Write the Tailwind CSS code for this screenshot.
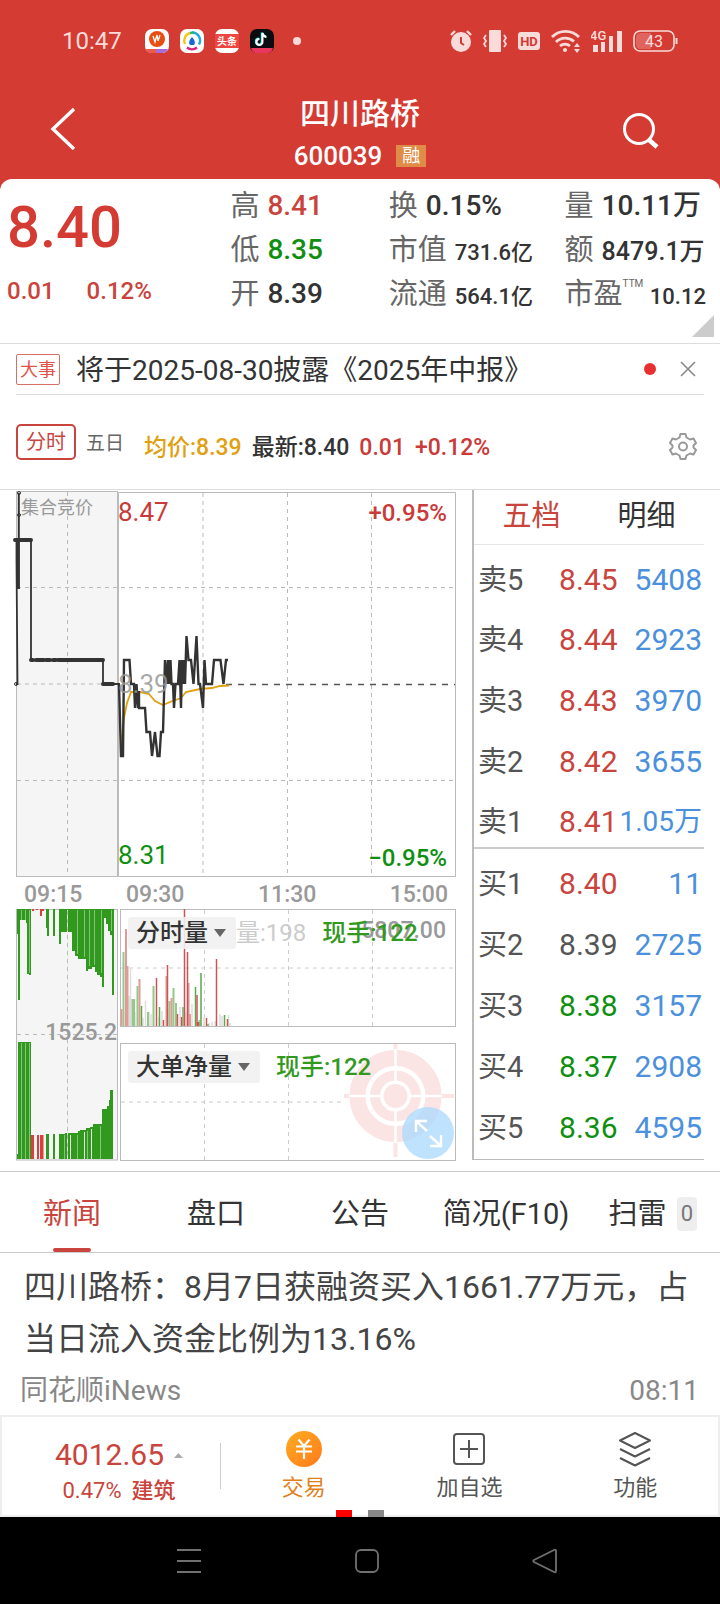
<!DOCTYPE html>
<html lang="zh-CN">
<head>
<meta charset="utf-8">
<meta name="viewport" content="width=device-width, initial-scale=1">
<title>四川路桥 600039</title>
<script src="https://cdn.jsdelivr.net/npm/@tailwindcss/browser@4"></script>
</head>
<body class="bg-black font-[Roboto,'Noto_Sans_CJK_SC',sans-serif] text-[#333]">
<div class="flex min-h-screen w-full flex-col bg-white">

  <div class="bg-[#d43b33]">
    <!-- status bar -->
    <div class="flex h-[82px] items-center justify-between pl-[62px] pr-[42px] text-[#f9dcda]">
      <div class="flex items-center gap-[11px]">
        <span class="mr-3 text-[24px] leading-6">10:47</span>
        <svg class="size-6" viewBox="0 0 24 24"><rect width="24" height="24" rx="7" fill="#fff"/><circle cx="12" cy="10" r="8" fill="#e84e10"/><path d="M8 7l2 6 2-7 1 6 2-6" stroke="#fff" fill="none" stroke-width="1.3"/><path d="M1 20h22q-2 4-6 4H7q-4 0-6-4z" fill="#a66bd8"/><path d="M1 20h10v4H7q-4 0-6-4z" fill="#ee5a4a"/></svg>
        <svg class="size-6" viewBox="0 0 24 24"><rect width="24" height="24" rx="7" fill="#fff"/><g fill="none" stroke-width="2.4"><path d="M5 15a8 8 0 0 1 5-11" stroke="#f6c51c"/><path d="M12 3.500a8 8 0 0 1 7 12" stroke="#22a6e8"/><path d="M10 4a8 8 0 0 1 4 0" stroke="#2bb673"/><path d="M7 18.500a8 8 0 0 0 10 0" stroke="#d6247c"/></g><path d="M12 8q3 3 3 6l-1 2h-4l-1-2q0-3 3-6z" fill="#1668d8"/></svg>
        <svg class="size-6" viewBox="0 0 24 24"><rect width="24" height="24" rx="7" fill="#fff"/><path d="M0 5h24v14H0z" fill="#ef4540"/><text x="12" y="16" font-size="10" font-weight="700" fill="#fff" text-anchor="middle">头条</text></svg>
        <svg class="size-6" viewBox="0 0 24 24"><rect width="24" height="24" rx="7" fill="#0b0b12"/><path d="M12.500 4v9a3 3 0 1 1-3-3M12.500 4q.5 3.500 4 4" fill="none" stroke="#25f4ee" stroke-width="2" transform="translate(-.7 -.5)"/><path d="M12.500 4v9a3 3 0 1 1-3-3M12.500 4q.5 3.500 4 4" fill="none" stroke="#fff" stroke-width="2"/><path d="M1 19h22q-1 5-6 5H7q-5 0-6-5z" fill="#e8365f"/></svg>
        <span class="ml-2 size-2 rounded-full bg-[#f9dcda]"></span>
      </div>
      <div class="flex items-center gap-[10px]">
        <svg class="size-6" viewBox="0 0 24 24" fill="#f9dcda"><circle cx="12" cy="13" r="10"/><path d="M2 6l4-4M22 6l-4-4" stroke="#f9dcda" stroke-width="2.400"/><path d="M12 8v6l3 2" stroke="#d43b33" stroke-width="2" fill="none"/></svg>
        <svg class="size-6" viewBox="0 0 24 24"><rect x="6" y="1" width="12" height="22" rx="1" fill="#f9dcda"/><path d="M3 6l-2 3 2 3-2 3 2 3M21 6l2 3-2 3 2 3-2 3" fill="none" stroke="#f9dcda" stroke-width="1.800"/></svg>
        <svg class="h-5 w-6" viewBox="0 0 24 20"><rect x="1" y="1" width="22" height="18" rx="3" fill="#f9dcda"/><text x="12" y="15" font-size="13" font-weight="700" fill="#d43b33" text-anchor="middle">HD</text></svg>
        <svg class="h-6 w-[30px]" viewBox="0 0 30 24" fill="none" stroke="#f9dcda" stroke-width="2.800"><path d="M1 8a19 19 0 0 1 27 0M5 13a13 13 0 0 1 18-.5M9 17a8 8 0 0 1 10 0"/><circle cx="14" cy="21" r="2" fill="#f9dcda" stroke="none"/><path d="M23 18l3-4 3 4zM23 20l3 4 3-4z" fill="#f9dcda" stroke="none"/></svg>
        <svg class="h-6 w-8" viewBox="0 0 32 24" fill="#f9dcda"><path d="M2 16h5v7H2zM10 13h4v10h-4zM18 7h4v16h-4zM26 2h5v21h-5z"/><text x="-1" y="11" font-size="13" font-weight="500">4G</text></svg>
        <svg class="h-[22px] w-[45px]" viewBox="0 0 45 22"><rect x="1" y="1" width="40" height="20" rx="6" fill="none" stroke="#f9dcda" stroke-width="1.600"/><path d="M3 8q0-5 5-5h10v16H8q-5 0-5-5z" fill="#e0655f"/><path d="M43.500 8v6" stroke="#f9dcda" stroke-width="2"/><text x="21" y="17" font-size="16" fill="#f9dcda" text-anchor="middle">43</text></svg>
      </div>
    </div>
    <!-- title bar -->
    <header class="grid h-[97px] grid-cols-[1fr_auto_1fr] items-start px-[46px] text-white">
      <button type="button" aria-label="返回" class="justify-self-start pt-[26px]"><svg class="h-[42px] w-[34px]" viewBox="0 0 34 42"><path d="M28 1L7 21l21 20" fill="none" stroke="#fff" stroke-width="3.400"/></svg></button>
      <div class="flex flex-col items-center pt-3">
        <h1 class="text-[30px] font-medium leading-10">四川路桥</h1>
        <div class="flex items-center gap-3.5 pt-1"><span class="text-[26px] font-medium leading-9">600039</span><span class="bg-[#e08c48] px-1.5 text-[18px] leading-[22px]">融</span></div>
      </div>
      <button type="button" aria-label="搜索" class="mr-3 justify-self-end pt-[28px]"><svg class="size-[42px]" viewBox="0 0 42 42"><circle cx="19" cy="19" r="14.500" fill="none" stroke="#fff" stroke-width="3"/><path d="M28 29l9 8" stroke="#fff" stroke-width="4.500"/></svg></button>
    </header>
    <!-- quote summary -->
    <section class="relative flex h-[165px] rounded-t-[12px] border-b border-[#ddd] bg-white">
      <div class="w-[32%] pl-[7px] font-medium text-[#d43b33]">
        <div class="pt-[18px] text-[58px] leading-[60px]">8.40</div>
        <div class="flex gap-8 pt-[18px] text-[24px] leading-8 text-[#c9443c]"><span>0.01</span><span>0.12%</span></div>
      </div>
      <dl class="grid w-[22%] auto-rows-[44px] content-start pt-[5px] text-[28px] leading-[44px] [&_dt]:text-[29px]">
        <div class="flex gap-2"><dt class="text-[#666]">高</dt><dd class="font-medium text-[#c9443c]">8.41</dd></div>
        <div class="flex gap-2"><dt class="text-[#666]">低</dt><dd class="font-medium text-[#0f8f0f]">8.35</dd></div>
        <div class="flex gap-2"><dt class="text-[#666]">开</dt><dd class="font-medium">8.39</dd></div>
      </dl>
      <dl class="grid w-[24%] auto-rows-[44px] content-start pt-[5px] text-[28px] leading-[44px] [&_dt]:text-[29px]">
        <div class="flex gap-2"><dt class="text-[#666]">换</dt><dd class="font-medium">0.15%</dd></div>
        <div class="flex items-baseline gap-2"><dt class="text-[#666]">市值</dt><dd class="text-[22px] font-medium">731.6亿</dd></div>
        <div class="flex items-baseline gap-2"><dt class="text-[#666]">流通</dt><dd class="text-[22px] font-medium">564.1亿</dd></div>
      </dl>
      <dl class="grid flex-1 auto-rows-[44px] content-start pl-[3px] pr-3.5 pt-[5px] text-[28px] leading-[44px] [&_dt]:text-[29px]">
        <div class="flex gap-2"><dt class="text-[#666]">量</dt><dd class="font-medium">10.11万</dd></div>
        <div class="flex items-baseline gap-2"><dt class="text-[#666]">额</dt><dd class="whitespace-nowrap text-[25px] font-medium">8479.1万</dd></div>
        <div class="flex items-baseline justify-between"><dt class="flex text-[#666]">市盈<span class="pt-1.5 text-[10px] leading-3">TTM</span></dt><dd class="text-[22px] font-medium">10.12</dd></div>
      </dl>
      <svg class="absolute bottom-1.5 right-1.5 size-[22px]" viewBox="0 0 22 22"><path d="M22 0v22H0z" fill="#ccc"/></svg>
    </section>
  </div>

  <!-- announcement -->
  <section class="mx-4 flex h-[51px] items-center border-b border-[#ddd]">
    <span class="rounded-xs border border-[#d97068] px-[3px] text-[18px] leading-[29px] text-[#e0524a]">大事</span>
    <a href="#notice" class="ml-4 flex-1 truncate pt-[3px] text-[28px] leading-10">将于2025-08-30披露《2025年中报》</a>
    <span class="size-3 rounded-full bg-[#e83030]"></span>
    <button type="button" aria-label="关闭" class="ml-6 mr-2"><svg class="size-4" viewBox="0 0 16 16"><path d="M1 1l14 14M15 1L1 15" stroke="#888" stroke-width="1.600"/></svg></button>
  </section>

  <!-- period switch -->
  <section class="flex h-[95px] items-center border-b border-[#ddd] px-4">
    <button type="button" class="rounded-[5px] border-2 border-[#c9443c] px-2 text-[20px] leading-8 text-[#c9443c]">分时</button>
    <button type="button" class="ml-2.5 pt-1 text-[19px] leading-8 text-[#666]">五日</button>
    <div class="ml-5 flex flex-1 gap-2.5 whitespace-nowrap pt-3 text-[23px] font-medium leading-8"><span class="text-[#e0a010]">均价:8.39</span><span>最新:8.40</span><span class="text-[#c93a38]">0.01</span><span class="text-[#c93a38]">+0.12%</span></div>
    <button type="button" aria-label="设置" class="mr-[7px] pt-2"><svg class="size-[28px]" viewBox="0 0 28 28" fill="none" stroke="#999" stroke-width="2" stroke-linejoin="round"><path d="M11.500 2h5l1 3.500 3.500 2 3.500-1 2.500 4.500-2.500 2.500v2l2.500 2.500-2.500 4.500-3.500-1-3.500 2-1 3.500h-5l-1-3.500-3.500-2-3.500 1L1 18l2.500-2.500v-2L1 11l2.500-4.500 3.500 1 3.500-2z"/><circle cx="14" cy="14.500" r="4"/></svg></button>
  </section>

  <!-- chart and order book -->
  <main class="flex items-start">
    <div class="min-w-0 flex-[59]">
      <svg class="block w-full" viewBox="0 489 472 419" role="img" aria-label="分时走势">
        <rect x="16.500" y="490.500" width="101" height="385" fill="#f5f5f5" stroke="#bbb"/>
        <path d="M118.500 491.500H455.500V875.500H118.500z" fill="none" stroke="#bbb"/>
        <g stroke="#bbb" stroke-dasharray="4 4"><path d="M67.500 491V875M203 492V875M287.500 492V875M371.500 492V875M17 586.500H455M17 779.500H455M17 683H118" fill="none"/></g>
        <path d="M226 683.500H455" stroke="#555" stroke-width="1.600" stroke-dasharray="6 6"/>
        <text x="21" y="513" font-size="18" fill="#999">集合竞价</text>
        <text x="118" y="520" font-size="26" fill="#c93a38">8.47</text>
        <text x="118" y="863" font-size="26" fill="#0f8f0f">8.31</text>
        <text x="447" y="520" font-size="24" font-weight="500" fill="#c93a38" text-anchor="end">+0.95%</text>
        <text x="447" y="865" font-size="24" font-weight="500" fill="#0f8f0f" text-anchor="end">−0.95%</text>
        <g fill="none" stroke="#333">
          <path d="M16 683h1.500L16.500 560V539M31 539V659M103 659V683H120" stroke-width="1.800"/>
          <path d="M18.800 588V492" stroke-width="2"/><path d="M17.800 588V539" stroke-width="3.600"/>
          <path d="M15 539H31M31 659h2M36 659h8M46 659h4M53 659h3M58 659H103M103 683h10" stroke-width="4" stroke-linecap="round"/>
          <circle cx="16" cy="683" r="1.500"/><circle cx="19" cy="492" r="1.500"/><circle cx="19" cy="514" r="1.500"/>
        </g>
        <path d="M121 745L124 717 127 702 131 691 140 691 149 693 155 700 163 704 170 701 181 697 186 691 200 688 212 687 220 685 229 684.500" fill="none" stroke="#e0a010" stroke-width="1.800"/>
        <path d="M119 683L121 755H123L124 659H129.500L131 683H134L135 707 136.500 683 138 707 139 690V707H145L146.500 731H150L152 755 155 731 157.500 755H159.500L161 731H163L165 659 167 683 168 659 169 683 170.500 659 171.500 683H173L174 707 175.500 683H178L179.500 659 181 707 182 659 183 683 184 659 185 683 186.500 635 188.500 659H191L193.500 683 196.500 635 198.500 683H200L203 707 204.500 659 206 683H212L214 659H220.500L223.500 683 226 659H228" fill="none" stroke="#333" stroke-width="2.400"/>
        <text x="118" y="692" font-size="26" fill="#999" fill-opacity=".85">8.39</text>
        <g font-size="23" font-weight="500" fill="#999"><text x="24" y="901">09:15</text><text x="126" y="901">09:30</text><text x="258" y="901">11:30</text><text x="448" y="901" text-anchor="end">15:00</text></g>
      </svg>
      <div class="flex items-start">
        <svg class="block w-1/4" viewBox="0 908 118 252" role="img" aria-label="竞价量">
          <rect x="16.500" y="908.500" width="101" height="250.500" fill="#f5f5f5" stroke="#bbb"/>
          <g fill="#32991f">
            <path d="M17 908H31v66h-2v-1h-2v-51h-1v-3h-6v80h-2v-66h-1zM46 908h3v27h-2v-8h-1zM53 908h2v27h-2zM59 908h55v86h-2v-60h-2v-4h-2v-7h-2v-6h-2v69h-2v-10h-2v-2h-3v-3h-2v-5h-3v2h-4v2h-2v-12h-8v-3h-3v-5h-3v-19h-11v12h-2z"/>
            <path d="M17 1158v-5h1v-112h13v117zM46 1133h3v25h-3zM53 1133h2v25h-2zM59 1158v-25h6v-1h13v-2h2v-1h6v-2h4v-1h3v-3h9v-15h5v-3h2v-6h1v-10h3v69z"/>
          </g>
          <path d="M32 908h2v2h-2zM36 908h2v1h-2zM40 908h2v7h-2zM42 908h2v2h-2z" fill="#d9403a"/>
          <path d="M31 1134h3v24h-3zM37 1134h2v24h-2zM40 1134h3.500v24h-3.500z" fill="#d9403a"/>
          <path d="M21.500 909V919M25.500 909V919M29.500 909V972M77.500 909V953M84.500 909V956M89.500 909V965M94.500 909V964M101.500 909V972M111.500 909V930M21.500 1042V1158M25.500 1042V1158M29.500 1042V1158M64.500 1134V1158M77.500 1134V1158M87.500 1130V1158M100.500 1125V1158" stroke="#86c37b"/>
          <path d="M67.500 909V1158M70.500 1134V1158M84.500 1131V1158M91.500 1128V1158" stroke="#e6efe3"/>
          <path d="M17 1033.500H117M67.500 910V1158" stroke="#bbb" stroke-dasharray="4 4"/>
          <text x="117" y="1039" font-size="23" font-weight="500" fill="#999" text-anchor="end">1525.2</text>
        </svg>
        <div class="flex w-3/4 flex-col gap-4">
          <div class="relative">
            <svg class="block w-full" viewBox="118 908 354 118" role="img" aria-label="分时量">
              <rect x="120.500" y="908.500" width="335" height="117" fill="none" stroke="#bbb"/>
              <path d="M121 967H455M204.500 909V1025M288.500 909V1025M372.500 909V1025" stroke="#ccc" stroke-dasharray="4 4"/>
              <g stroke-width="1.500" fill="none">
                <path d="M129 1025V995M130.500 1025V968M135 1025V1011M143 1025V1017M145.500 1025V1000M151 1025V1013M162 1025V1010M180 1025V1006M186 1025V1011M192 1025V1003M209 1025V1022M212 1025V1021M215 1025V1020M220 1025V1013M222 1025V1015M230 1025V1022M149 1025V1011M159 1025V1016M204 1025V1016M228.500 1025V1014" stroke="#ddd"/>
                <path d="M123.500 1025V951M132.500 1025V998M134 1025V998M137.500 1025V985M148 1025V1011M153.500 1025V985M169.500 1025V1000M173.500 1025V987M176 1025V1002M183 1025V1006M199.500 1025V1019M208 1025V1023" stroke="#94c98b" stroke-width="2"/>
                <path d="M121.500 1025V1008M126 1025V928M127.500 1025V965M139.500 1025V978M171.500 1025V997M188.500 1025V982M190 1025V1013M166.500 1025V975" stroke="#e29a98" stroke-width="2"/>
                <path d="M141.500 1025V1005M159.500 1025V1006M195.500 1025V986M201 1025V972M224.500 1025V1014" stroke="#58aa4c"/>
                <path d="M156.500 1025V977M163.500 1025V1019M167.500 1025V964M177.500 1025V1013M181.500 1025V1016M184.500 1025V908M187.500 1025V951M197 1025V994M198.500 1025V1021M206.500 1025V1017M216.500 1025V958M227.500 1025V1018" stroke="#cc5553"/>
              </g>
              <text x="446" y="937" font-size="23" font-weight="500" fill="#999" text-anchor="end">5807.00</text>
            </svg>
            <div class="absolute left-2.5 top-2 flex items-center whitespace-nowrap text-[24px] font-medium leading-8">
              <button type="button" class="flex items-center gap-1.5 rounded-[3px] bg-[#f1f1f1]/90 pl-2 pr-2.5">分时量<svg class="h-2 w-3" viewBox="0 0 12 8"><path d="M0 0h12L6 8z" fill="#666"/></svg></button>
              <span class="font-normal text-[#ccc]">量:198</span>
              <span class="ml-4 text-[#32991f]">现手:122</span>
            </div>
          </div>
          <div class="relative">
            <svg class="block w-full" viewBox="118 1042 354 118" role="img" aria-label="大单净量">
              <path d="M121 1101H341M204.500 1043V1159M288.500 1043V1159" stroke="#ccc" stroke-dasharray="4 4"/>
              <g fill="none" stroke="#fbe5e4">
                <circle cx="395.500" cy="1095" r="38" stroke-width="16"/><circle cx="395.500" cy="1095" r="20.500" stroke-width="10"/><circle cx="395.500" cy="1095" r="12" fill="#fbe5e4" stroke="none"/>
                <path d="M344 1095h8M439 1095h15M395.500 1043v8M395.500 1140v16" stroke-width="4"/>
              </g>
              <path d="M349 1095h34M408 1095h34M395.500 1048v34M395.500 1108v34" stroke="#fff" stroke-width="2.500"/>
              <rect x="120.500" y="1042.500" width="335" height="117" fill="none" stroke="#bbb"/>
            </svg>
            <div class="absolute left-2.5 top-2 flex items-center gap-4 whitespace-nowrap text-[24px] font-medium leading-8">
              <button type="button" class="flex items-center gap-1.5 rounded-[3px] bg-[#f1f1f1]/90 pl-2 pr-2.5">大单净量<svg class="h-2 w-3" viewBox="0 0 12 8"><path d="M0 0h12L6 8z" fill="#666"/></svg></button>
              <span class="text-[#32991f]">现手:122</span>
            </div>
            <button type="button" aria-label="全屏" class="absolute bottom-0.5 right-[18px] size-[52px] rounded-full bg-[#a9d9ff]/75"><svg class="size-full" viewBox="0 0 52 52" fill="none" stroke="#fff" stroke-width="2.400"><path d="M14 25V14h11M14.500 14.500L25 24M39 28v11H28M38.500 38.500L28 29"/></svg></button>
          </div>
        </div>
      </div>
    </div>

    <aside class="min-w-0 flex-[31]">
      <div class="mr-4 border-b border-l-2 border-[#bbb] pb-1.5">
        <div class="grid h-[55px] grid-cols-2 border-b border-[#e5e5e5] text-[29px]"><button type="button" class="text-[#c9443c]">五档</button><button type="button">明细</button></div>
        <table class="w-full table-fixed border-collapse text-[30px] leading-9 text-[#555] [&_td]:whitespace-nowrap [&_td]:pt-2.5 [&_th]:pl-1 [&_th]:pt-2.5 [&_th]:text-left [&_th]:text-[29px] [&_th]:font-normal">
          <colgroup><col class="w-[37%]"><col class="w-[26%]"><col class="w-[37%]"></colgroup>
          <tbody class="border-b-2 border-[#ccc]">
            <tr class="h-[59px]"><th scope="row">卖5</th><td class="text-[#c9443c]">8.45</td><td class="pr-0.5 text-right text-[#4a90dc]">5408</td></tr>
            <tr class="h-[61px]"><th scope="row">卖4</th><td class="text-[#c9443c]">8.44</td><td class="pr-0.5 text-right text-[#4a90dc]">2923</td></tr>
            <tr class="h-[61px]"><th scope="row">卖3</th><td class="text-[#c9443c]">8.43</td><td class="pr-0.5 text-right text-[#4a90dc]">3970</td></tr>
            <tr class="h-[61px]"><th scope="row">卖2</th><td class="text-[#c9443c]">8.42</td><td class="pr-0.5 text-right text-[#4a90dc]">3655</td></tr>
            <tr class="h-[61px]"><th scope="row">卖1</th><td class="text-[#c9443c]">8.41</td><td class="pr-0.5 text-right text-[28px] text-[#4a90dc]">1.05万</td></tr>
          </tbody>
          <tbody>
            <tr class="h-[61px]"><th scope="row">买1</th><td class="text-[#c9443c]">8.40</td><td class="pr-0.5 text-right text-[#4a90dc]">11</td></tr>
            <tr class="h-[61px]"><th scope="row">买2</th><td>8.39</td><td class="pr-0.5 text-right text-[#4a90dc]">2725</td></tr>
            <tr class="h-[61px]"><th scope="row">买3</th><td class="text-[#0f8f0f]">8.38</td><td class="pr-0.5 text-right text-[#4a90dc]">3157</td></tr>
            <tr class="h-[61px]"><th scope="row">买4</th><td class="text-[#0f8f0f]">8.37</td><td class="pr-0.5 text-right text-[#4a90dc]">2908</td></tr>
            <tr class="h-[61px]"><th scope="row">买5</th><td class="text-[#0f8f0f]">8.36</td><td class="pr-0.5 text-right text-[#4a90dc]">4595</td></tr>
          </tbody>
        </table>
      </div>
    </aside>
  </main>

  <!-- news tabs -->
  <nav class="mt-2.5 grid h-[82px] grid-cols-5 border-y border-[#ccc] text-[29px] leading-10 [&>a]:pt-[3px]">
    <a href="#news" class="relative flex items-center justify-center text-[#c9443c]">新闻<span class="absolute bottom-0 h-1 w-[38px] rounded-full bg-[#c9443c]"></span></a>
    <a href="#pankou" class="flex items-center justify-center">盘口</a>
    <a href="#gonggao" class="flex items-center justify-center">公告</a>
    <a href="#f10" class="flex items-center justify-center whitespace-nowrap pl-1">简况(F10)</a>
    <a href="#saolei" class="flex items-center justify-end gap-2.5 whitespace-nowrap pr-[23px]">扫雷<span class="rounded-sm bg-[#eee] px-1 text-[22px] leading-[34px] text-[#777]">0</span></a>
  </nav>
  <article class="h-[162px] pl-5 pr-[21px] pt-2">
    <a href="#article" class="block pl-1 text-[32px] leading-[52px] text-[#444]">四川路桥：8月7日获融资买入1661.77万元，占当日流入资金比例为13.16%</a>
    <div class="flex justify-between pt-0.5 text-[28px] leading-[48px] text-[#888]"><span>同花顺iNews</span><time>08:11</time></div>
  </article>

  <!-- action bar -->
  <section class="relative flex h-[102px] border-2 border-[#eee]">
    <div class="flex w-[218px] flex-col items-center pl-4 text-[#c9443c]">
      <div class="flex items-center gap-2.5 pt-5 text-[30px] leading-9">4012.65<svg class="h-[5px] w-[9px]" viewBox="0 0 9 5"><path d="M4.500 0L9 5H0z" fill="#aaa"/></svg></div>
      <div class="flex gap-2.5 text-[22px] leading-9"><span>0.47%</span><span class="font-medium">建筑</span></div>
    </div>
    <div class="mt-[26px] h-[46px] w-px bg-[#ccc]"></div>
    <div class="grid flex-1 grid-cols-3 text-[22px] leading-7 text-[#555]">
      <button type="button" class="flex flex-col items-center gap-[7px] pt-3.5 text-[#e08020]"><svg class="size-9" viewBox="0 0 36 36"><defs><linearGradient id="coin" x2="1" y2="1"><stop stop-color="#ffac20"/><stop offset="1" stop-color="#ff7a1c"/></linearGradient></defs><circle cx="18" cy="18" r="18" fill="url(#coin)"/><path d="M12.500 8.500L18 15l5.500-6.500M10 15.500h16M10 20.500h16M18 15v13" fill="none" stroke="#fff" stroke-width="2.200"/></svg>交易</button>
      <button type="button" class="flex flex-col items-center gap-[7px] pt-3.5"><svg class="size-9" viewBox="0 0 36 36" fill="none" stroke="#555" stroke-width="2"><rect x="3" y="3" width="30" height="30" rx="3"/><path d="M18 9v18M9 18h18"/></svg>加自选</button>
      <button type="button" class="flex flex-col items-center gap-[7px] pt-3.5"><svg class="size-9" viewBox="0 0 36 36" fill="none" stroke="#555" stroke-width="2" stroke-linejoin="round"><path d="M18 2l15 7.500L18 17 3 9.500zM3 18l15 7.500L33 18M3 27l15 7.500L33 27"/></svg>功能</button>
    </div>
    <div class="absolute inset-x-0 -bottom-0.5 flex justify-center gap-4"><span class="h-[7px] w-4 bg-[#f00]"></span><span class="h-[7px] w-4 bg-[#888]"></span></div>
  </section>

  <!-- system navigation -->
  <nav class="flex flex-1 items-center justify-between bg-black pl-[175px] pr-[161px]">
    <button type="button" aria-label="最近任务"><svg class="size-7" viewBox="0 0 28 28"><path d="M2 3h24M2 14h24M2 25h24" stroke="#707070" stroke-width="2"/></svg></button>
    <button type="button" aria-label="主页"><svg class="size-7" viewBox="0 0 28 28"><rect x="3" y="3" width="22" height="22" rx="5" fill="none" stroke="#707070" stroke-width="1.800"/></svg></button>
    <button type="button" aria-label="返回上一页"><svg class="size-7" viewBox="0 0 28 28"><path d="M25 4v20q0 2-2 1L3 15q-1.500-1 0-2L23 3q2-1 2 1z" fill="none" stroke="#707070" stroke-width="1.800"/></svg></button>
  </nav>
</div>
</body>
</html>
